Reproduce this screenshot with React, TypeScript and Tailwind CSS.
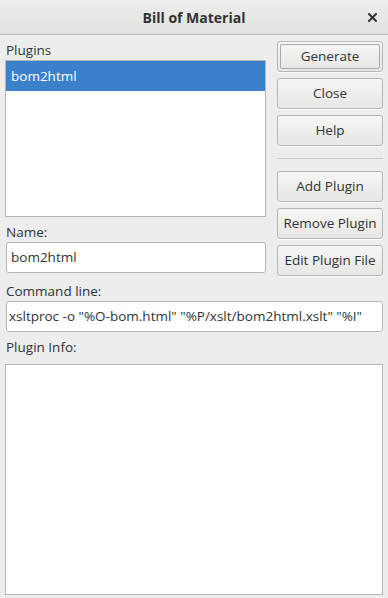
import React from "react";

const FONT = { fontFamily: '"Open Sans", "DejaVu Sans", sans-serif' };

function Btn({ label, main = false }: { label: string; main?: boolean }) {
  return (
    <button
      className="h-[31px] w-full rounded-[3px] border border-[#b6b6b3] bg-gradient-to-b from-[#f6f6f5] to-[#e6e6e4] p-[2px] text-[13.5px] text-[#2e3436] shadow-[0_1px_0_rgba(255,255,255,0.8)]"
    >
      <span
        className={
          "flex h-full w-full items-center justify-center rounded-[2px] " +
          (main ? "border border-[#a9a9a6]" : "border border-transparent")
        }
      >
        {label}
      </span>
    </button>
  );
}

export default function App() {
  return (
    <div className="flex h-[598px] w-[388px] flex-col bg-[#ededed] text-[#2e3436]" style={FONT}>
      {/* header bar */}
      <div className="relative flex h-[35px] items-center justify-center border-b border-[#b9b9b6] bg-gradient-to-b from-[#ededec] to-[#e2e2e0]">
        <span className="text-[14px] font-bold">Bill of Material</span>
        <svg className="absolute left-[368px] top-[13px]" width="9" height="9" viewBox="0 0 9 9">
          <path d="M1 1 L8 8 M8 1 L1 8" stroke="#2e3436" strokeWidth="2" strokeLinecap="square" />
        </svg>
      </div>

      <div className="flex flex-1 flex-col px-[5px] pb-[3px]">
        <div className="flex gap-[11px]">
          {/* left column */}
          <div className="flex w-[262px] flex-col">
            <div className="mt-[6px] h-[19px] pl-[1px] text-[13.5px] leading-[19px]">Plugins</div>
            <div className="h-[157px] border border-[#b6b6b3] bg-white">
              <div className="flex h-[30px] items-center bg-[#3b80cb] px-[5px] text-[13.5px] text-white">bom2html</div>
            </div>
            <div className="mt-[6px] h-[19px] pl-[1px] text-[13.5px] leading-[19px]">Name:</div>
            <div className="ml-[1px] flex h-[31px] w-[260px] items-center rounded-[3px] border border-[#b6b6b3] bg-white px-[4px] text-[13.5px]">
              bom2html
            </div>
          </div>

          {/* right column */}
          <div className="flex w-[107px] flex-col pt-[6px]">
            <div className="flex flex-col gap-[6px]">
              <Btn label="Generate" main />
              <Btn label="Close" />
              <Btn label="Help" />
            </div>
            <div className="my-[12px] h-px bg-[#c8c8c5]" />
            <div className="flex flex-col gap-[6px]">
              <Btn label="Add Plugin" />
              <Btn label="Remove Plugin" />
              <Btn label="Edit Plugin File" />
            </div>
          </div>
        </div>

        <div className="mt-[6px] h-[19px] pl-[1px] text-[13.5px] leading-[19px]">Command line:</div>
        <div className="ml-[1px] flex h-[31px] w-[377px] items-center overflow-hidden whitespace-nowrap rounded-[3px] border border-[#b6b6b3] bg-white px-[2px] text-[13.5px]">
          xsltproc -o "%O-bom.html" "%P/xslt/bom2html.xslt" "%I"
        </div>
        <div className="mt-[6px] h-[19px] pl-[1px] text-[13.5px] leading-[19px]">Plugin Info:</div>
        <div className="mt-[7px] flex-1 border border-[#b6b6b3] bg-white" />
      </div>
    </div>
  );
}
